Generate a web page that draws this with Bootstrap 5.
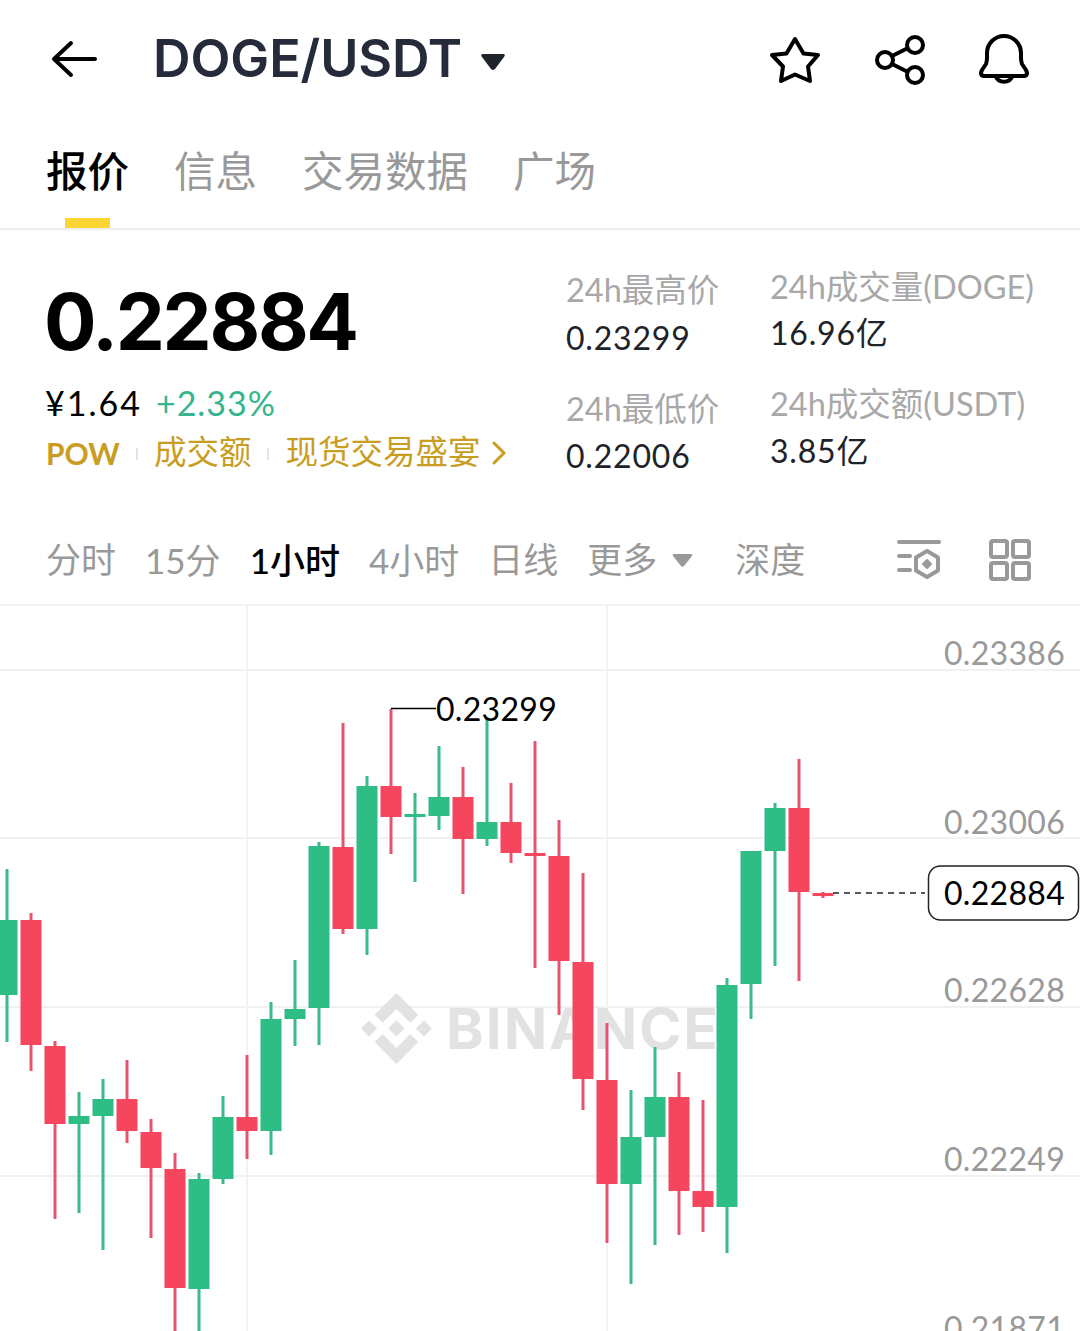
<!DOCTYPE html>
<html lang="zh-CN">
<head>
  <meta charset="UTF-8">
  <title>DOGE/USDT</title>
  <meta name="viewport" content="width=device-width, initial-scale=1.0" />
  <link href="https://cdn.jsdelivr.net/npm/bootstrap@5.3.2/dist/css/bootstrap.min.css" rel="stylesheet" />
  <style>
    html, body { height: 1331px; overflow: hidden; }
    body {
      font-family: Inter, "Noto Sans CJK SC", sans-serif;
      background: #fff;
      color: #000;
    }
    .hdr { height: 118px; padding-left: 51px; padding-right: 49px; }
    .hdr-title { font-size: 52px; font-weight: 600; color: #252b3a; line-height: 1; margin-left: 54px; letter-spacing: -0.1px; }
    .hdr-caret { margin-left: 18px; margin-top: 6px; }
    .hdr-icons { gap: 51.5px; padding-top: 3px; }

    .tabs-row { height: 112px; padding-left: 46px; padding-bottom: 1px; gap: 45px; border-bottom: 2px solid #eee; font-size: 41.5px; color: #999; }
    .tab-on { color: #000; font-weight: 500; position: relative; height: 100%; display: flex; align-items: center; }
    .tab-on::after { content: ""; position: absolute; left: 19px; bottom: -1px; width: 45px; height: 10px; background: #fcd535; }

    .stats { height: 290px; }
    .stats-left { width: 566px; padding-left: 46px; }
    .big-price { font-size: 78px; font-weight: 700; line-height: 1; margin-top: 53px; margin-left: -2px; letter-spacing: -2.3px; }
    .fiat { font-family: Lato, "Noto Sans CJK SC", sans-serif; font-size: 34px; line-height: 1; margin-top: 25px; margin-left: -1px; gap: 14px; }
    .fiat-cny { letter-spacing: 2px; }
    .fiat-up { color: #36b58c; letter-spacing: 1px; }
    .promo { font-size: 32.5px; color: #c99d22; line-height: 1; margin-top: 17px; gap: 34px; }
    .promo span { position: relative; }
    .promo-lat { font-family: Lato, sans-serif; font-size: 30px; font-weight: 700; }
    .promo-sep::before { content: ""; position: absolute; left: -18px; top: 11px; height: 12px; width: 2px; background: #e4e4e4; }
    .promo-chev { margin-left: -22px; }

    .stat-col { font-family: Lato, "Noto Sans CJK SC", sans-serif; font-size: 32px; line-height: 1; }
    .stat-a { width: 204px; padding-top: 44px; }
    .stat-b { padding-top: 41px; }
    .stat-lbl { color: #a8a8a8; font-size: 32.5px; }
    .stat-val { color: #1e2329; letter-spacing: 0.8px; }
    .stat-a .stat-val { margin-top: 15px; }
    .stat-b .stat-val { margin-top: 13px; }
    .stat-b .stat-val.last-val { margin-top: 15px; }
    .stat-lbl.lower-a { margin-top: 39px; }
    .stat-lbl.lower-b { margin-top: 39px; }

    .ranges { height: 86px; padding-left: 46px; padding-right: 49px; padding-bottom: 4px; gap: 29px; border-bottom: 2px solid #f2f2f2; font-size: 35px; color: #999; }
    .rng-num { font-family: Lato, "Noto Sans CJK SC", sans-serif; }
    .rng-on { color: #000; font-weight: 500; }
    .rng-caret { margin-left: -14px; }
    .rng-depth { margin-left: 13px; }

    .chart-box { height: 725px; overflow: hidden; }
    .chart-box svg { display: block; }
    .axis-lbl { font-family: Lato, sans-serif; font-size: 32px; fill: #999; letter-spacing: 0.3px; }
    .dark-lbl { font-family: Lato, sans-serif; font-size: 32px; fill: #000; letter-spacing: 0.3px; }
    .wm-text { font-family: Inter, sans-serif; font-size: 57px; font-weight: 700; fill: #e2e2e2; letter-spacing: 2px; }
  </style>
</head>
<body>
  <div class="hdr d-flex align-items-center">
    <svg width="48" height="38" viewBox="51 43 48 38" fill="none" stroke="#000" stroke-width="4" stroke-linecap="round" stroke-linejoin="round">
      <path d="M95 62H54M71 46L54 62L71 78"/>
    </svg>
    <div class="hdr-title">DOGE/USDT</div>
    <svg class="hdr-caret" width="26" height="18" viewBox="0 0 26 18"><path d="M3 1H23Q26 1 24 4L15 16Q13 18 11 16L2 4Q0 1 3 1Z" fill="#1e2329"/></svg>
    <div class="hdr-icons d-flex align-items-center ms-auto">
      <svg width="54" height="52" viewBox="768 35 54 52" fill="none" stroke="#000" stroke-width="4" stroke-linejoin="round">
        <path d="M795 39L803.5 53.5L818 55L808 66.5L810 81L795 74.5L781 81L783 66.5L772 55L786.5 53.5Z"/>
      </svg>
      <svg width="54" height="52" viewBox="874 35 54 52" fill="none" stroke="#000" stroke-width="4">
        <circle cx="915" cy="45" r="8"/><circle cx="885" cy="60" r="8"/><circle cx="915" cy="75" r="8"/>
        <path d="M892 56L908 48M892 64L908 72"/>
      </svg>
      <svg width="52" height="54" viewBox="979 33 52 54" fill="none" stroke="#000" stroke-width="4" stroke-linejoin="round">
        <path d="M985 75H1023Q1029 75 1026 69L1022 63Q1021 60 1021 57V52A17 17 0 0 0 987 52V57Q987 60 986 63L982 69Q979 75 985 75Z"/>
        <path d="M996 76A8.5 7 0 0 0 1012 76"/>
      </svg>
    </div>
  </div>

  <div class="tabs-row d-flex align-items-center">
    <div class="tab-on">报价</div>
    <div>信息</div>
    <div>交易数据</div>
    <div>广场</div>
  </div>

  <div class="stats d-flex">
    <div class="stats-left">
      <div class="big-price">0.22884</div>
      <div class="fiat d-flex">
        <span class="fiat-cny">¥1.64</span>
        <span class="fiat-up">+2.33%</span>
      </div>
      <div class="promo d-flex align-items-center">
        <span class="promo-lat">POW</span>
        <span class="promo-sep">成交额</span>
        <span class="promo-sep">现货交易盛宴</span>
        <svg class="promo-chev" width="14" height="24" viewBox="0 0 14 24" fill="none" stroke="#c99d22" stroke-width="3" stroke-linecap="round" stroke-linejoin="round"><path d="M2 2L12 12L2 22"/></svg>
      </div>
    </div>
    <div class="stat-col stat-a">
      <div class="stat-lbl">24h最高价</div>
      <div class="stat-val">0.23299</div>
      <div class="stat-lbl lower-a">24h最低价</div>
      <div class="stat-val">0.22006</div>
    </div>
    <div class="stat-col stat-b">
      <div class="stat-lbl">24h成交量(DOGE)</div>
      <div class="stat-val">16.96亿</div>
      <div class="stat-lbl lower-b">24h成交额(USDT)</div>
      <div class="stat-val last-val">3.85亿</div>
    </div>
  </div>

  <div class="ranges d-flex align-items-center">
    <div>分时</div>
    <div class="rng-num">15分</div>
    <div class="rng-num rng-on">1小时</div>
    <div class="rng-num">4小时</div>
    <div>日线</div>
    <div>更多</div>
    <svg class="rng-caret" width="21" height="13" viewBox="0 0 21 13"><path d="M2 0H19Q21 0 20 2L12 12Q10.500 13.500 9 12L1 2Q0 0 2 0Z" fill="#999"/></svg>
    <div class="rng-depth">深度</div>
    <div class="d-flex align-items-center ms-auto gap-5">
      <svg width="44" height="42" viewBox="896 540 44 42" fill="none" stroke="#999" stroke-width="4" stroke-linecap="round" stroke-linejoin="round">
        <path d="M898 543H938M898 557H909M898 571H909"/>
        <path d="M926 552L937 558.500V571.500L926 578L915 571.500V558.500Z"/>
        <path d="M926 561L930 565L926 569L922 565Z" fill="#999" stroke-width="2"/>
      </svg>
      <svg width="42" height="42" viewBox="990 538 42 42" fill="none" stroke="#999" stroke-width="4">
        <rect x="992" y="540" width="16" height="16" rx="2"/><rect x="1014" y="540" width="16" height="16" rx="2"/>
        <rect x="992" y="562" width="16" height="16" rx="2"/><rect x="1014" y="562" width="16" height="16" rx="2"/>
      </svg>
    </div>
  </div>

  <div class="chart-box">
    <svg id="chart" width="1080" height="725" viewBox="0 606 1080 725"></svg>
  </div>

  <script>
    const svg = document.getElementById('chart');
    const NS = 'http://www.w3.org/2000/svg';

    function add(tag, attrs, text) {
      const el = document.createElementNS(NS, tag);
      for (const k in attrs) el.setAttribute(k, attrs[k]);
      if (text) el.textContent = text;
      svg.appendChild(el);
      return el;
    }

    // grid
    [669, 837, 1006, 1175].forEach(y => add('rect', { x: 0, y: y, width: 1080, height: 2, fill: '#f1f1f1' }));
    [247, 607].forEach(x => add('rect', { x: x - 1, y: 606, width: 2, height: 725, fill: '#f3f3f3' }));

    // watermark
    add('path', {
      d: 'M38.73 53.2l24.59-24.58 24.6 24.6 14.3-14.31L63.32 0 24.43 38.9zM0 63.31l14.3-14.31 14.31 14.31-14.31 14.3zM38.73 73.41l24.59 24.59 24.6-24.6 14.31 14.29-38.9 38.91-38.91-38.88zM98 63.31l14.3-14.31 14.31 14.3-14.31 14.32zM77.83 63.3L63.32 48.78 52.59 59.51l-1.24 1.23-2.54 2.54 14.51 14.5 14.51-14.47z',
      fill: '#e2e2e2',
      transform: 'translate(361 993) scale(0.56)'
    });
    add('text', { x: 446, y: 1049, class: 'wm-text' }, 'BINANCE');

    // x, up?, wick top, body top, body bottom, wick bottom
    const candles = [
      [7, 1, 869, 920, 995, 1042], [31, 0, 913, 920, 1045, 1071], [55, 0, 1041, 1046, 1124, 1219],
      [79, 1, 1092, 1116, 1124, 1213], [103, 1, 1079, 1099, 1116, 1250], [127, 0, 1060, 1099, 1131, 1143],
      [151, 0, 1119, 1132, 1168, 1238], [175, 0, 1153, 1169, 1288, 1340], [199, 1, 1173, 1179, 1289, 1340],
      [223, 1, 1096, 1117, 1179, 1184], [247, 0, 1055, 1117, 1131, 1159], [271, 1, 1002, 1019, 1131, 1155],
      [295, 1, 960, 1009, 1019, 1046], [319, 1, 842, 846, 1008, 1045], [343, 0, 723, 847, 929, 934],
      [367, 1, 776, 786, 929, 955], [391, 0, 709, 786, 817, 854], [415, 1, 793, 814, 817, 882],
      [439, 1, 746, 797, 816, 830], [463, 0, 767, 797, 839, 894], [487, 1, 717, 822, 839, 846],
      [511, 0, 783, 822, 853, 863], [535, 0, 741, 853, 856, 968], [559, 0, 820, 856, 961, 1015],
      [583, 0, 873, 962, 1079, 1110], [607, 0, 1023, 1080, 1184, 1243], [631, 1, 1090, 1137, 1184, 1284],
      [655, 1, 1047, 1097, 1137, 1245], [679, 0, 1072, 1097, 1191, 1235], [703, 0, 1100, 1191, 1207, 1232],
      [727, 1, 978, 985, 1207, 1253], [751, 1, 851, 851, 984, 1019], [775, 1, 803, 808, 851, 966],
      [799, 0, 759, 808, 892, 981], [823, 0, 892, 893, 896, 898]
    ];

    candles.forEach(c => {
      const [x, up, wt, bt, bb, wb] = c;
      add('rect', { x: x - 1.5, y: wt, width: 3, height: wb - wt, fill: up ? '#3bba8e' : '#e4566f' });
      add('rect', { x: x - 10.5, y: bt, width: 21, height: bb - bt, fill: up ? '#2ebd85' : '#f6465d' });
    });

    // axis labels
    [['0.23386', 665], ['0.23006', 834], ['0.22628', 1002], ['0.22249', 1171], ['0.21871', 1340]].forEach(l => {
      add('text', { x: 1065, y: l[1], 'text-anchor': 'end', class: 'axis-lbl' }, l[0]);
    });

    // high marker
    add('path', { d: 'M391 708.500H436', stroke: '#000', 'stroke-width': 1.5, fill: 'none' });
    add('text', { x: 436, y: 721, class: 'dark-lbl' }, '0.23299');

    // last price
    add('path', { d: 'M833 893H925', stroke: '#222', 'stroke-width': 1.5, 'stroke-dasharray': '6 5', fill: 'none' });
    add('rect', { x: 928.5, y: 866, width: 150, height: 54, rx: 12, fill: '#fff', stroke: '#222', 'stroke-width': 1.5 });
    add('text', { x: 1065, y: 905, 'text-anchor': 'end', class: 'dark-lbl' }, '0.22884');
  </script>
  <script src="https://cdn.jsdelivr.net/npm/bootstrap@5.3.2/dist/js/bootstrap.bundle.min.js"></script>
</body>
</html>
